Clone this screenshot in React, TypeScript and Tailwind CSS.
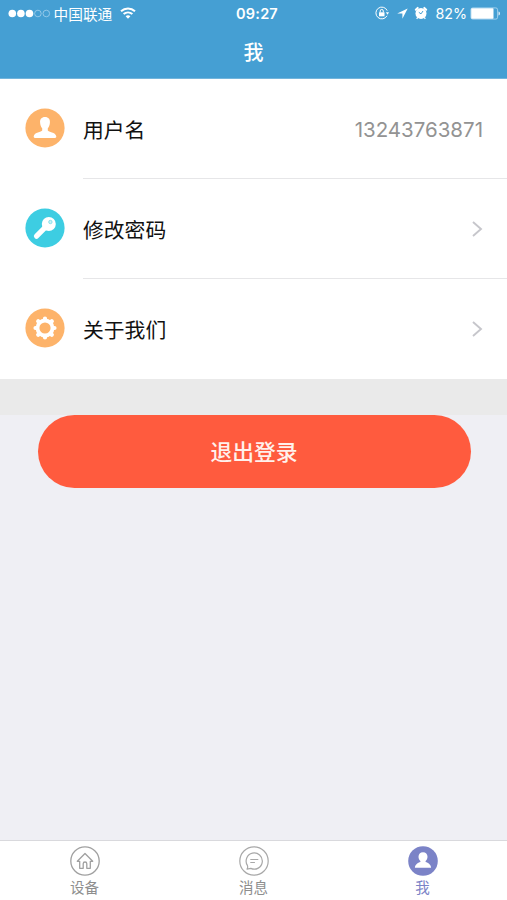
import { useState } from 'react';
import type { ReactNode } from 'react';

interface Row {
  id: string;
  label: string;
  icon: ReactNode;
  value?: string;
}

const UserIcon = () => (
  <svg viewBox="0 0 40 40" className="w-10 h-10">
    <circle cx="20" cy="20" r="19.6" fill="#fdb36a" />
    <path d="M20 9c-3.400 0-5.200 2.300-4.900 5.500.1 2.400.9 4.500 2.100 5.700v2.300c-.6 1.500-7.800 1.600-8.500 5.800 0 1.100.4 1.700 1.300 1.700h20c.9 0 1.300-.6 1.300-1.700-.7-4.200-7.900-4.300-8.500-5.800v-2.300c1.200-1.200 2-3.300 2.100-5.700.3-3.200-1.500-5.500-4.900-5.500z" fill="#fff" />
  </svg>
);

const KeyIcon = () => (
  <svg viewBox="0 0 40 40" className="w-10 h-10">
    <circle cx="20" cy="20" r="19.6" fill="#3dcde2" />
    <path d="M20.500 19.200 11.500 28.200" stroke="#fff" strokeWidth="5.200" strokeLinecap="round" />
    <circle cx="23.800" cy="16" r="7" fill="#fff" />
    <circle cx="25.400" cy="14" r="1.700" fill="#cdf2f7" stroke="#74dae8" strokeWidth=".8" />
  </svg>
);

const GearIcon = () => (
  <svg viewBox="0 0 40 40" className="w-10 h-10">
    <circle cx="20" cy="20" r="19.6" fill="#fdb36a" />
    <g stroke="#fff" strokeWidth="4.200" strokeLinecap="round">
      <path d="M20 10.500v19M10.500 20h19M13.200 13.200l13.600 13.600M26.800 13.200 13.200 26.800" />
    </g>
    <circle cx="20" cy="20" r="7.500" fill="#fdb36a" stroke="#fff" strokeWidth="3.800" />
  </svg>
);

const Chevron = () => (
  <svg viewBox="0 0 12 18" className="w-3 h-[18px]" fill="none" stroke="#c6c6cb" strokeWidth="1.900">
    <path d="M2 2 10 9l-8 7" />
  </svg>
);

const rows: Row[] = [
  { id: 'user', label: '用户名', icon: <UserIcon />, value: '13243763871' },
  { id: 'password', label: '修改密码', icon: <KeyIcon /> },
  { id: 'about', label: '关于我们', icon: <GearIcon /> },
];

function StatusBar() {
  return (
    <div className="grid grid-cols-[1fr_auto_1fr] items-center h-7 pl-2 pr-1.5 text-white">
      <div className="flex items-center">
        <svg viewBox="0 0 43 10" className="w-[43px] h-2.5">
          <circle cx="4.300" cy="4.500" r="3.800" fill="#fff" />
          <circle cx="12.900" cy="4.500" r="3.800" fill="#fff" />
          <circle cx="21.500" cy="4.500" r="3.800" fill="#fff" />
          <circle cx="29.900" cy="4.500" r="3.300" fill="none" stroke="#a5d2ed" strokeWidth=".8" />
          <circle cx="38.300" cy="4.500" r="3.300" fill="none" stroke="#a5d2ed" strokeWidth=".8" />
        </svg>
        <span className="ml-[2.500px] pt-0.5 text-[14.700px] leading-none">中国联通</span>
        <svg viewBox="0 0 16 12" className="ml-2 mb-0.5 w-4 h-3" fill="none" stroke="#fff" strokeWidth="2">
          <path d="M1 4.200c4-3.700 10-3.700 14 0M3.600 7.100c2.600-2.300 6.200-2.300 8.800 0" />
          <path d="M5.600 9.200c1.500-1.300 3.300-1.300 4.800 0L8 11.700z" fill="#fff" stroke="none" />
        </svg>
      </div>
      <span className="ml-[5px] text-[14.500px] font-semibold leading-none tracking-[.2px]">09:27</span>
      <div className="flex items-center justify-end">
        <svg viewBox="0 0 14 14" className="w-3.5 h-3.5 mr-2 mb-0.5" fill="none" stroke="#fff">
          <path d="M12.200 4.600A5.900 5.900 0 1 0 12 9.800" strokeWidth="1" />
          <path d="M10.900 6.200h3.100l-1.500 2.600z" fill="#fff" stroke="none" />
          <rect x="4" y="6.300" width="5.500" height="4" fill="#fff" stroke="none" />
          <path d="M5.200 6.500V5a1.550 1.550 0 0 1 3.100 0v1.500" strokeWidth="1" />
        </svg>
        <svg viewBox="0 0 11 11" className="w-[11px] h-[11px] mr-1.5 mb-0.5" fill="#fff">
          <path d="M10.700.4.200 5.500h5.200v5.200z" />
        </svg>
        <svg viewBox="0 0 14 14" className="w-3.5 h-3.5 mr-[7px] mb-0.5" fill="#fff">
          <circle cx="7" cy="7.400" r="5.500" />
          <path d="M1.800 3.700 3.700 1.900M12.200 3.700l-1.900-1.800" stroke="#fff" strokeWidth="2" strokeLinecap="round" />
          <path d="m3.700 11.400-1 1.500M10.300 11.400l1 1.500" stroke="#fff" strokeWidth="1.200" />
          <path d="M4.800 6.300 7 7.900l2-2.900" fill="none" stroke="#459fd3" strokeWidth="1" />
        </svg>
        <span className="text-[14.300px] leading-none">82%</span>
        <svg viewBox="0 0 31 13" className="ml-[3px] mb-px w-[31px] h-[13px]">
          <rect x=".9" y=".9" width="26.700" height="11.200" rx="1.800" fill="none" stroke="#b5dbf2" strokeWidth=".8" />
          <rect x="1.200" y="1.200" width="22.300" height="10.600" rx=".8" fill="#fff" />
          <path d="M28.500 4.500c2 .6 2 3.400 0 4z" fill="#d7ecf8" />
        </svg>
      </div>
    </div>
  );
}

const tabs = [
  {
    id: 'device',
    label: '设备',
    icon: (
      <svg viewBox="0 0 30 30" className="w-[30px] h-[30px]" fill="none" stroke="#a0a0a0" strokeWidth="1.300">
        <circle cx="15" cy="15" r="14.200" />
        <path d="M7.300 15.300 15 7.500l7.700 7.800h-2.400v7h-3.500v-4.500a1.800 1.800 0 0 0-3.600 0v4.500H9.700v-7z" strokeLinejoin="round" />
      </svg>
    ),
  },
  {
    id: 'message',
    label: '消息',
    icon: (
      <svg viewBox="0 0 30 30" className="w-[30px] h-[30px]" fill="none" stroke="#a8a8a8" strokeWidth="1.200">
        <circle cx="15" cy="15" r="14.200" />
        <path d="M8.400 19.400a8.100 8.100 0 1 1 3.400 3l-3.800.7c.7-1 .9-2.300.4-3.700z" strokeLinejoin="round" />
        <path d="M11.300 13.500h8M11.300 16.500h4.600" />
      </svg>
    ),
  },
  {
    id: 'me',
    label: '我',
    icon: (
      <svg viewBox="0 0 30 30" className="w-[30px] h-[30px]">
        <circle cx="15" cy="15" r="14.800" fill="#7b83c7" />
        <path d="M15 6.200c-2.800 0-4.500 1.900-4.500 4.600 0 1.900.8 3.400 1.900 4.300v.8c-2.700.9-5.200 2.200-5.500 5.900h16.200c-.3-3.700-2.800-5-5.500-5.900v-.8c1.100-.9 1.900-2.400 1.900-4.300 0-2.700-1.700-4.600-4.500-4.600z" fill="#fff" />
      </svg>
    ),
  },
];

export default function App() {
  const [activeTab, setActiveTab] = useState('me');

  return (
    <div className="flex flex-col h-[900px] w-full bg-[#efeff4] overflow-hidden font-[Inter,'Noto_Sans_CJK_SC',sans-serif]">
      <header className="h-[79px] shrink-0 bg-[#459fd3] border-b border-[#73b5dc]">
        <StatusBar />
        <h1 className="h-[50px] text-center text-white text-[20px] font-medium leading-[51px]">我</h1>
      </header>

      <main className="flex-1">
        <div className="bg-white">
          {rows.map((row, i) => (
            <div key={row.id} className="flex h-[100px] pl-[25px]">
              <div className="w-[58px] shrink-0 pt-[29px]">{row.icon}</div>
              <div className={`flex flex-1 items-center justify-between pr-6 ${i < rows.length - 1 ? 'border-b border-[#e6e6e8]' : ''}`}>
                <span className="pt-1 text-[20.800px] text-[#111]">{row.label}</span>
                {row.value ? (
                  <span className="pt-[3px] text-[20.500px] text-[#939393]">{row.value}</span>
                ) : (
                  <Chevron />
                )}
              </div>
            </div>
          ))}
        </div>
        <div className="h-9 bg-[#eaeaea]" />
        <div className="pl-[37.500px] pr-[36.500px]">
          <button className="block w-full h-[72.500px] pt-[3px] rounded-full bg-[#ff5b3e] text-[#fff1ec] text-[21.800px] font-medium">
            退出登录
          </button>
        </div>
      </main>

      <nav className="grid grid-cols-3 h-[60px] shrink-0 bg-white border-t border-[#d9d9dd]">
        {tabs.map((tab) => (
          <button
            key={tab.id}
            onClick={() => setActiveTab(tab.id)}
            className={`flex flex-col items-center pt-[5px] text-[14.500px] ${activeTab === tab.id ? 'text-[#7b83c7]' : 'text-[#8e8e8e]'}`}
          >
            {tab.icon}
            <span className="mt-1 leading-[16px]">{tab.label}</span>
          </button>
        ))}
      </nav>
    </div>
  );
}
